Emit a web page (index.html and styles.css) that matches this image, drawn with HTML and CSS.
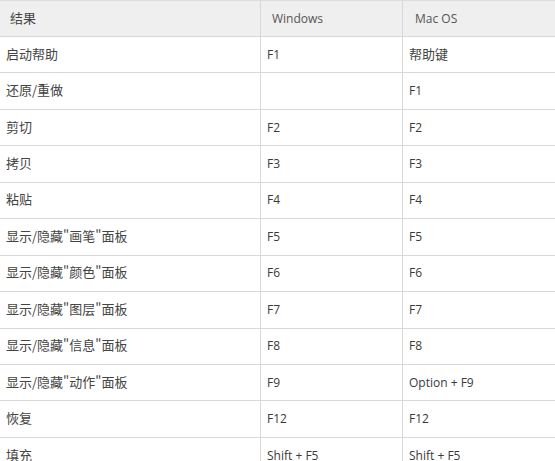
FILE: index.html
```html
<!DOCTYPE html>
<html lang="zh-CN">
<head>
<meta charset="utf-8">
<link rel="stylesheet" href="styles.css">
</head>
<body>
<div class="table">
  <div class="row head">
    <div class="cell c1 zh">结果</div>
    <div class="cell c2">Windows</div>
    <div class="cell c3">Mac OS</div>
  </div>
  <div class="row"><div class="cell c1 zh">启动帮助</div><div class="cell c2">F1</div><div class="cell c3 zh">帮助键</div></div>
  <div class="row"><div class="cell c1 zh">还原/重做</div><div class="cell c2"></div><div class="cell c3">F1</div></div>
  <div class="row"><div class="cell c1 zh">剪切</div><div class="cell c2">F2</div><div class="cell c3">F2</div></div>
  <div class="row"><div class="cell c1 zh">拷贝</div><div class="cell c2">F3</div><div class="cell c3">F3</div></div>
  <div class="row"><div class="cell c1 zh">粘贴</div><div class="cell c2">F4</div><div class="cell c3">F4</div></div>
  <div class="row"><div class="cell c1 zh">显示/隐藏"画笔"面板</div><div class="cell c2">F5</div><div class="cell c3">F5</div></div>
  <div class="row"><div class="cell c1 zh">显示/隐藏"颜色"面板</div><div class="cell c2">F6</div><div class="cell c3">F6</div></div>
  <div class="row"><div class="cell c1 zh">显示/隐藏"图层"面板</div><div class="cell c2">F7</div><div class="cell c3">F7</div></div>
  <div class="row"><div class="cell c1 zh">显示/隐藏"信息"面板</div><div class="cell c2">F8</div><div class="cell c3">F8</div></div>
  <div class="row"><div class="cell c1 zh">显示/隐藏"动作"面板</div><div class="cell c2">F9</div><div class="cell c3">Option + F9</div></div>
  <div class="row"><div class="cell c1 zh">恢复</div><div class="cell c2">F12</div><div class="cell c3">F12</div></div>
  <div class="row"><div class="cell c1 zh">填充</div><div class="cell c2">Shift + F5</div><div class="cell c3">Shift + F5</div></div>
</div>
</body>
</html>
```

FILE: styles.css
```css
html, body {
  margin: 0;
  padding: 0;
  background: #ffffff;
  overflow: hidden;
}
body {
  font-family: "Open Sans", "Noto Sans CJK SC", sans-serif;
  font-size: 12px;
  color: #3a3a3a;
}
.table {
  width: 580px;
  border-top: 1px solid #dcdcdc;
}
.row {
  display: flex;
  height: 36.45px;
  box-sizing: border-box;
  border-bottom: 1px solid #d8d8d8;
}
.row.head {
  height: 36px;
  background: #efefef;
  color: #555555;
}
.cell {
  display: flex;
  align-items: center;
  box-sizing: border-box;
  white-space: nowrap;
  padding-bottom: 1px;
}
.c1 {
  width: 261px;
  padding-left: 6px;
  border-right: 1px solid #d8d8d8;
}
.c2 {
  width: 142px;
  padding-left: 6px;
  border-right: 1px solid #d8d8d8;
}
.c3 {
  flex: 1;
  padding-left: 6px;
}
.head .c1 { padding-left: 10px; }
.head .c2 { padding-left: 11px; }
.head .c3 { padding-left: 12px; }
.zh {
  font-family: "Noto Sans CJK SC", sans-serif;
  font-size: 13px;
  padding-bottom: 3px;
  color: #444444;
}
```
